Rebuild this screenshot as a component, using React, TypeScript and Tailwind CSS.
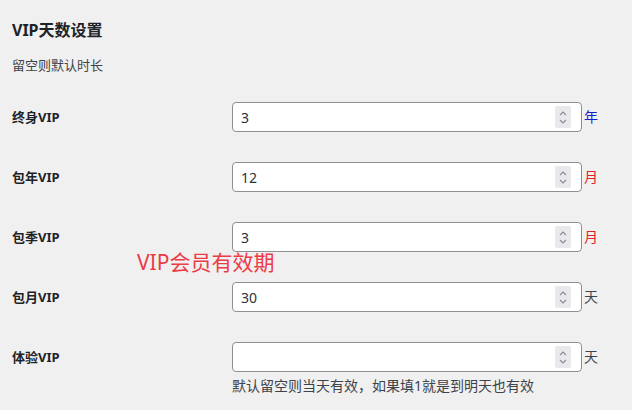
const rows = [
  { label: "终身VIP", value: "3", unit: "年", unitClass: "text-[#1d1dd0]" },
  { label: "包年VIP", value: "12", unit: "月", unitClass: "text-[#e0222b]" },
  { label: "包季VIP", value: "3", unit: "月", unitClass: "text-[#e0222b]" },
  { label: "包月VIP", value: "30", unit: "天", unitClass: "text-[#3c434a]" },
  { label: "体验VIP", value: "", unit: "天", unitClass: "text-[#3c434a]" },
];

function Spinner() {
  return (
    <div className="absolute right-[11px] top-[4px] flex h-[22px] w-[16px] flex-col items-center justify-center rounded-[2px] bg-[#e9e9ed]">
      <svg width="8" height="5" viewBox="0 0 8 5" fill="none">
        <path d="M1 4 L4 1 L7 4" stroke="#8a8a90" strokeWidth="1.1" />
      </svg>
      <svg width="8" height="5" viewBox="0 0 8 5" fill="none" className="mt-[3px]">
        <path d="M1 1 L4 4 L7 1" stroke="#8a8a90" strokeWidth="1.1" />
      </svg>
    </div>
  );
}

export default function App() {
  return (
    <div
      className="relative min-h-[410px] w-[632px] bg-[#f0f0f1] pl-3 text-[#1d2327]"
      style={{ fontFamily: '"Noto Sans", "Noto Sans CJK SC", sans-serif' }}
    >
      <h2 className="pt-[19px] text-[16px] font-bold leading-[22px]">VIP天数设置</h2>
      <p className="mt-[14px] text-[13px] leading-[20px] text-[#3c434a]">留空则默认时长</p>

      <div className="mt-[27px] flex flex-col gap-[30px]">
        {rows.map((r) => (
          <div key={r.label} className="flex h-[30px] items-center">
            <div className="w-[220px] text-[13px] font-bold leading-[20px]">{r.label}</div>
            <div className="relative h-[30px] w-[350px]">
              <input
                type="text"
                readOnly
                value={r.value}
                className="h-full w-full rounded-[4px] border border-[#8c8f94] bg-white pl-[8px] text-[14px] text-[#2c3338] outline-none"
              />
              <Spinner />
            </div>
            <span className={`ml-[2px] text-[14px] leading-[20px] ${r.unitClass}`}>{r.unit}</span>
          </div>
        ))}
      </div>

      <p className="ml-[220px] mt-[4px] text-[14px] leading-[20px] text-[#3c434a]">
        默认留空则当天有效，如果填1就是到明天也有效
      </p>

      <div className="absolute left-[137px] top-[248px] text-[21px] leading-[28px] text-[#ec3b44]">
        VIP会员有效期
      </div>
    </div>
  );
}
